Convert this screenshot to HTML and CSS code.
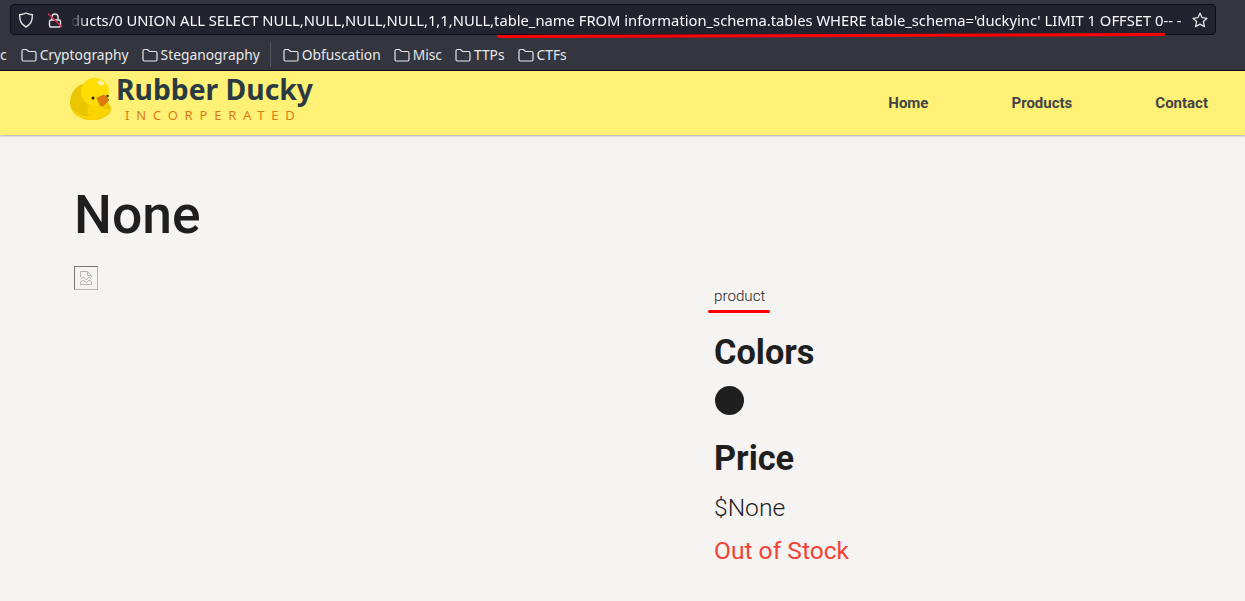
FILE: index.html
```html
<!DOCTYPE html>
<html lang="en">
<head>
<meta charset="utf-8">
<title>Rubber Ducky Incorperated</title>
<link rel="stylesheet" href="styles.css">
</head>
<body>
<div class="chrome">
  <div class="urlbar">
    <svg class="ic-shield" width="16" height="16" viewBox="0 0 16 16" fill="none" stroke="#e4e4e6" stroke-width="1.4"><path d="M8 1 C10 2.200 12 2.600 14.400 2.800 C14.600 8.500 13 12.500 8 15 C3 12.500 1.400 8.500 1.600 2.800 C4 2.600 6 2.200 8 1 Z"/></svg>
    <svg class="ic-lock" width="16" height="16" viewBox="0 0 16 16" fill="none"><path d="M5 7.500V5a3 3 0 0 1 6 0v2.500" stroke="#e4e4e6" stroke-width="1.4"/><rect x="2.500" y="8" width="11" height="7" rx="1.500" stroke="#e4e4e6" stroke-width="1.4"/><path d="M1 1.500 L15 15" stroke="#e22850" stroke-width="1.500"/></svg>
    <div class="url">ducts/0 UNION ALL SELECT NULL,NULL,NULL,NULL,1,1,NULL,table_name FROM information_schema.tables WHERE table_schema='duckyinc' LIMIT 1 OFFSET 0-- -</div>
    <svg class="ic-star" width="16" height="16" viewBox="0 0 16 16" fill="none" stroke="#e4e4e6" stroke-width="1.300" stroke-linejoin="round"><path d="M8 1.200 L10.100 5.700 L15 6.300 L11.400 9.600 L12.400 14.600 L8 12.100 L3.600 14.600 L4.600 9.600 L1 6.300 L5.900 5.700 Z"/></svg>
  </div>
  <div class="bookmarks">
    <span class="bm bm-cut">c</span>
    <span class="bm"><svg class="folder" viewBox="0 0 16 14"><path d="M1 3a1.500 1.500 0 0 1 1.500-1.500h3l2 2h6A1.500 1.500 0 0 1 15 5v6.500a1.500 1.500 0 0 1-1.500 1.500h-11A1.500 1.500 0 0 1 1 11.500z"/></svg>Cryptography</span>
    <span class="bm"><svg class="folder" viewBox="0 0 16 14"><path d="M1 3a1.500 1.500 0 0 1 1.500-1.500h3l2 2h6A1.500 1.500 0 0 1 15 5v6.500a1.500 1.500 0 0 1-1.500 1.500h-11A1.500 1.500 0 0 1 1 11.500z"/></svg>Steganography</span>
    <span class="bm-sep"></span>
    <span class="bm"><svg class="folder" viewBox="0 0 16 14"><path d="M1 3a1.500 1.500 0 0 1 1.500-1.500h3l2 2h6A1.500 1.500 0 0 1 15 5v6.500a1.500 1.500 0 0 1-1.500 1.500h-11A1.500 1.500 0 0 1 1 11.500z"/></svg>Obfuscation</span>
    <span class="bm"><svg class="folder" viewBox="0 0 16 14"><path d="M1 3a1.500 1.500 0 0 1 1.500-1.500h3l2 2h6A1.500 1.500 0 0 1 15 5v6.500a1.500 1.500 0 0 1-1.500 1.500h-11A1.500 1.500 0 0 1 1 11.500z"/></svg>Misc</span>
    <span class="bm"><svg class="folder" viewBox="0 0 16 14"><path d="M1 3a1.500 1.500 0 0 1 1.500-1.500h3l2 2h6A1.500 1.500 0 0 1 15 5v6.500a1.500 1.500 0 0 1-1.500 1.500h-11A1.500 1.500 0 0 1 1 11.500z"/></svg>TTPs</span>
    <span class="bm"><svg class="folder" viewBox="0 0 16 14"><path d="M1 3a1.500 1.500 0 0 1 1.500-1.500h3l2 2h6A1.500 1.500 0 0 1 15 5v6.500a1.500 1.500 0 0 1-1.500 1.500h-11A1.500 1.500 0 0 1 1 11.500z"/></svg>CTFs</span>
  </div>
</div>
<header class="site-header">
  <div class="logo">
    <svg class="duck" width="44" height="46" viewBox="0 0 44 46">
      <path d="M1 24 C2 15 8 8 14 7 L30 12 L42 30 C43 36 36 42 26 43 C14 44 4 38 2 31 C1 29 1 26 1 24 Z" fill="#e9c600"/>
      <path d="M2 29 C6 37 13 40 21 39 C18 36 18 31 20 27 L26 28 L41 33 C38 39 32 42 26 43 C14 44 4 38 2 29 Z" fill="#fbd400"/>
      <circle cx="26" cy="15" r="14" fill="#ffdd00"/>
      <ellipse cx="32" cy="6" rx="3.500" ry="2.300" fill="#fff0a0" transform="rotate(25 32 6)"/>
      <circle cx="24" cy="21" r="1.500" fill="#222"/>
      <circle cx="38.500" cy="19" r="1.200" fill="#222"/>
      <path d="M28 21 L35 18 L40 23 L34 29 L31 28 Z" fill="#dc7a0c" stroke="#dc7a0c" stroke-linejoin="round"/>
    </svg>
    <div class="logo-text">
      <div class="logo-name">Rubber Ducky</div>
      <div class="logo-sub">INCORPERATED</div>
    </div>
  </div>
  <nav class="nav">
    <a>Home</a>
    <a>Products</a>
    <a>Contact</a>
  </nav>
</header>
<main class="page">
  <h1 class="title">None</h1>
  <div class="columns">
    <div class="col-image">
      <div class="broken">
        <svg width="14" height="16" viewBox="0 0 14 16" fill="none" stroke="#b4b4b4" stroke-width="1"><path d="M1.500 7V1.500h7l4 4V7M8.500 1.500v4h4M1.500 9l3-2 3 3 2.500-3 2.500 2M1.500 12l3-2 3 3 2.500-3 2.500 2M1.500 12v2.500h11V12"/></svg>
      </div>
    </div>
    <div class="col-info">
      <p class="label">product</p>
      <h2 class="heading">Colors</h2>
      <div class="swatch"></div>
      <h2 class="heading heading-price">Price</h2>
      <p class="price">$None</p>
      <p class="stock">Out of Stock</p>
    </div>
  </div>
</main>
<div class="mark mark-url"></div>
<div class="mark mark-product"></div>
</body>
</html>
```
FILE: styles.css
```css
* { box-sizing: border-box; }
html, body { margin: 0; padding: 0; }
body {
  width: 1245px;
  height: 601px;
  overflow: hidden;
  background: #f6f4f3;
  font-family: Roboto, sans-serif;
  color: #1f1f1f;
  position: relative;
}
.chrome {
  height: 71px;
  background: #33363f;
  border-bottom: 1px solid #0e0e12;
  padding: 4px 29px 0 10px;
  font-family: "Noto Sans", sans-serif;
  color: #fbfbfe;
}
.urlbar {
  height: 31px;
  background: #22232e;
  border: 1px solid #0e0f13;
  border-radius: 4px;
  display: flex;
  align-items: center;
  padding: 0 7px;
}
.ic-shield { margin-right: 13px; flex: none; }
.ic-lock { margin-right: 12px; flex: none; }
.url {
  flex: 1;
  font-size: 14.75px;
  white-space: nowrap;
  overflow: hidden;
  color: #fbfbfe;
  margin-left: -4px;
  -webkit-mask-image: linear-gradient(to right, transparent 0, #000 16px);
  mask-image: linear-gradient(to right, transparent 0, #000 16px);
}
.ic-star { flex: none; }
.bookmarks {
  height: 39px;
  margin-left: -10px;
  display: flex;
  align-items: center;
  font-size: 13.8px;
  gap: 13px;
  color: #e8e8ea;
}
.bm { display: flex; align-items: center; gap: 3px; white-space: nowrap; }
.bm-cut { margin-right: 1px; }
.bm-sep { width: 1px; height: 25px; background: #53555d; margin: 0 -1px 0 -3px; }
.folder { width: 16px; height: 14px; fill: none; stroke: #e8e8ea; stroke-width: 1.2; }
.site-header {
  height: 64px;
  background: #fff176;
  box-shadow: 0 1px 2px rgba(0,0,0,.3);
  display: flex;
  align-items: center;
  justify-content: space-between;
  padding: 0 37px 0 69px;
}
.logo { display: flex; align-items: center; gap: 3px; }
.duck { display: block; margin-top: -6px; }
.logo-text { display: flex; flex-direction: column; align-items: flex-start; margin-bottom: 12px; }
.logo-name {
  font-family: "Noto Sans", sans-serif;
  font-weight: 700;
  font-size: 28.3px;
  line-height: 32px;
  color: #2b3a42;
}
.logo-sub {
  font-family: "Noto Sans", sans-serif;
  font-size: 13px;
  line-height: 14px;
  letter-spacing: 6.8px;
  color: #e07b14;
  margin: 3px 0 0 9px;
}
.nav { display: flex; gap: 83px; }
.nav a { font-size: 15px; font-weight: 700; color: #444; }
.page { padding: 0 75px; }
.title {
  margin: 0 0 0 -1px;
  padding-top: 45px;
  font-size: 53.4px;
  line-height: 70px;
  font-weight: 500;
  color: #1f1f1f;
}
.columns { display: flex; }
.col-image { width: 640px; flex: none; padding-top: 16px; margin-left: -1px; }
.broken {
  width: 24px;
  height: 24px;
  border: 1px solid;
  border-color: #777 #b5b5b5 #b5b5b5 #777;
  display: flex;
  align-items: center;
  justify-content: center;
}
.col-info { padding-top: 36px; }
.label { margin: 0; font-size: 15.2px; font-weight: 300; line-height: 20px; }
.heading { margin: 0; font-size: 34.3px; font-weight: 700; line-height: 42px; padding-top: 25px; }
.swatch { width: 29px; height: 29px; border-radius: 50%; background: #1f1f1f; margin: 13px 0 0 1px; }
.heading-price { padding-top: 22px; }
.price { margin: 0; font-size: 24.6px; font-weight: 300; line-height: 32px; padding-top: 13px; }
.stock { margin: 0; font-size: 24.6px; line-height: 32px; padding-top: 11px; color: #f44336; }
.mark { position: absolute; background: #f00; border-radius: 2px; }
.mark-url { left: 497px; top: 34px; width: 668px; height: 3px; transform: rotate(-.17deg); }
.mark-product { left: 708px; top: 310px; width: 62px; height: 3px; }
```
